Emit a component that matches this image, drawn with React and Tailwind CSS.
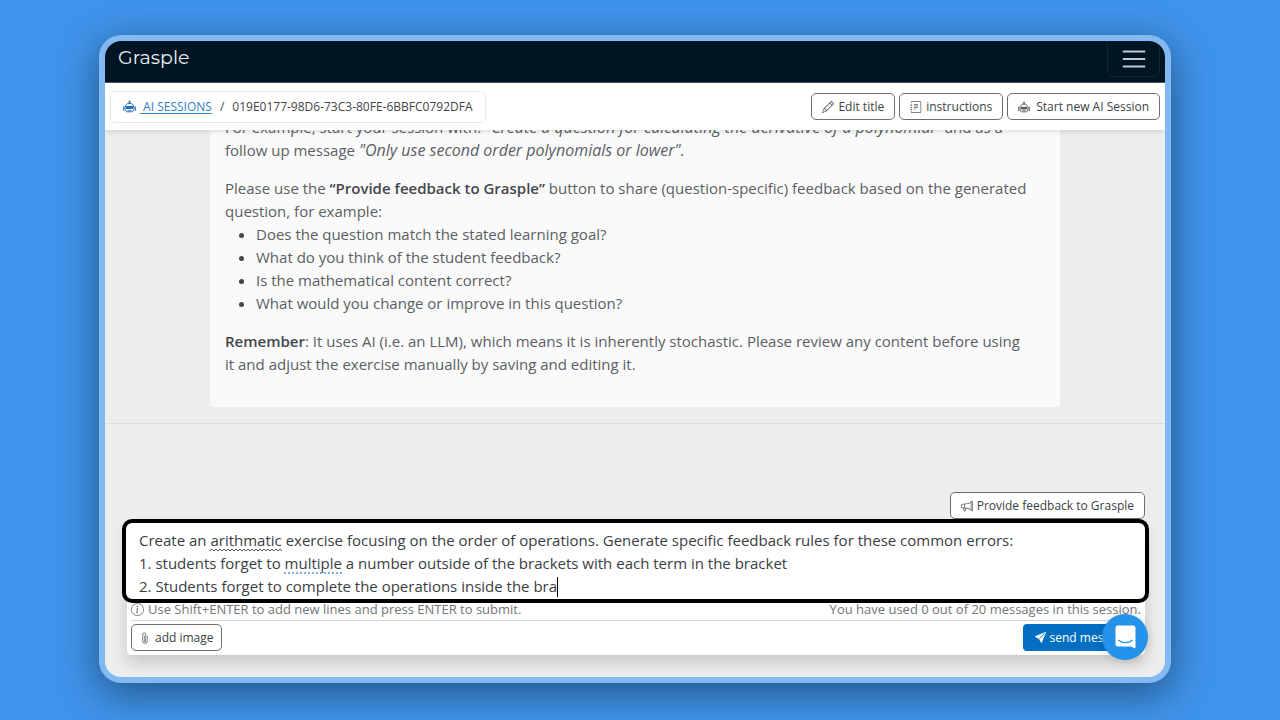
import { useState } from "react";
import {
  BsInfoCircle,
  BsJournalText,
  BsMegaphone,
  BsPaperclip,
  BsPencil,
  BsSendFill,
} from "react-icons/bs";
import clsx from "clsx";

const questions = [
  "Does the question match the stated learning goal?",
  "What do you think of the student feedback?",
  "Is the mathematical content correct?",
  "What would you change or improve in this question?",
];

const draft = [
  "Create an arithmatic exercise focusing on the order of operations. Generate specific feedback rules for these common errors:",
  "1. students forget to multiple a number outside of the brackets with each term in the bracket",
  "2. Students forget to complete the operations inside the bra",
].join("\n");

const RobotIcon = ({ className }) => (
  <svg viewBox="0 0 16 16" className={className} aria-hidden="true">
    <path
      d="M8 1.500v2.500"
      stroke="currentColor"
      strokeWidth="2"
      strokeLinecap="round"
    />
    <path
      d="M2.500 10C2.500 6 4.800 4 8 4s5.500 2 5.500 6c0 3-1 4.500-2.500 4.500H5C3.500 14.500 2.500 13 2.500 10z"
      fill="none"
      stroke="currentColor"
      strokeWidth="1.200"
    />
    <path
      d="M.9 8.500v4M15.100 8.500v4"
      stroke="currentColor"
      strokeWidth="1.400"
      strokeLinecap="round"
    />
    <path
      d="M3.500 7.500h9v2c0 1-.8 1.700-1.700 1.700H5.200c-.9 0-1.700-.7-1.700-1.700z"
      fill="currentColor"
    />
    <path d="M5.500 12.800h5" stroke="currentColor" strokeWidth="1" />
  </svg>
);

const OutlineButton = ({ icon, compact, children }) => (
  <button
    type="button"
    className={clsx(
      "flex h-[27px] items-center gap-1 whitespace-nowrap rounded-[5px] border border-[#6b6f74] bg-white text-xs font-medium text-[#3b3f45]",
      compact ? "px-[7px]" : "px-[10px]"
    )}
  >
    <span className="text-[#5c6065]">{icon}</span>
    {children}
  </button>
);

const Header = () => (
  <header className="flex h-[42px] shrink-0 items-start justify-between border-b border-[#4a5560] bg-[#001524] pl-[13px] pr-[5px]">
    <a
      href="#home"
      className="pt-1 font-['Montserrat','Lato',sans-serif] text-[19px] leading-[26px] text-[#e8ecef]"
    >
      Grasple
    </a>
    <button
      type="button"
      aria-label="Toggle navigation"
      className="flex h-9 w-[53px] items-center justify-center rounded-b-md border border-t-0 border-[#12222f]"
    >
      <svg viewBox="0 0 30 30" className="size-7" aria-hidden="true">
        <path
          d="M3 7h24M3 15h24M3 23h24"
          stroke="#c3c9ce"
          strokeWidth="2"
          fill="none"
        />
      </svg>
    </button>
  </header>
);

const SessionBar = () => (
  <div className="z-10 flex h-[47px] shrink-0 items-center justify-between bg-white px-[5px] shadow-[0_2px_4px_rgba(0,0,0,0.1)]">
    <nav
      aria-label="Breadcrumb"
      className="flex h-8 items-center rounded-[5px] border border-[#e9e9ea] px-3 text-xs text-[#3f4348]"
    >
      <RobotIcon className="mr-1 size-[13px] text-[#1f6fb5]" />
      <a
        href="#sessions"
        className="whitespace-pre text-[#2f7fc4] underline underline-offset-2"
      >
        {" AI SESSIONS"}
      </a>
      <span className="px-2">/</span>
      <span>019E0177-98D6-73C3-80FE-6BBFC0792DFA</span>
    </nav>
    <div className="flex gap-1">
      <OutlineButton icon={<BsPencil className="size-3" />}>
        Edit title
      </OutlineButton>
      <OutlineButton icon={<BsJournalText className="size-3" />}>
        instructions
      </OutlineButton>
      <OutlineButton icon={<RobotIcon className="mr-0.5 size-3" />}>
        Start new AI Session
      </OutlineButton>
    </div>
  </div>
);

const Intro = () => (
  <section className="flex min-h-0 flex-1 flex-col justify-end overflow-hidden border-b border-[#dcdcdd] px-[105px] pb-4">
    <div className="rounded-b-[4px] bg-[#fafafb] pr-[30px] pb-[31px] pl-[15px] text-[15px] leading-[23px] text-[#5b5f64]">
      <p className="mb-[15px]">
        For example, start your session with:{" "}
        <em className="text-base leading-[23px]">
          "Create a question for calculating the derivative of a polynomial"
        </em>{" "}
        and as a follow up message{" "}
        <em className="text-base leading-[23px]">
          "Only use second order polynomials or lower".
        </em>
      </p>
      <p>
        Please use the{" "}
        <strong className="font-semibold text-[#43474c]">
          “Provide feedback to Grasple”
        </strong>{" "}
        button to share (question-specific) feedback based on the generated
        question, for example:
      </p>
      <ul className="mb-[15px] list-disc pl-[31px] marker:text-[#43474c]">
        {questions.map((question) => (
          <li key={question}>{question}</li>
        ))}
      </ul>
      <p>
        <strong className="font-semibold text-[#43474c]">Remember</strong>: It
        uses AI (i.e. an LLM), which means it is inherently stochastic. Please
        review any content before using it and adjust the exercise manually by
        saving and editing it.
      </p>
    </div>
  </section>
);

const MessageBox = () => {
  const [message, setMessage] = useState(draft);

  return (
    <div className="relative z-10 -ml-px rounded-[6px] bg-white outline-4 outline-black">
      <textarea
        aria-label="Message"
        rows={3}
        spellCheck={false}
        value={message}
        onChange={(e) => setMessage(e.target.value)}
        className="block w-full resize-none overflow-hidden px-[13px] pt-1.5 pb-px text-[15px] leading-[23px] text-[#3a3e43] outline-none"
      />
      {/* spelling and grammar marks, then the caret */}
      {message === draft && (
        <>
          <svg
            className="absolute top-[25px] left-[84px] h-1 w-[72px]"
            aria-hidden="true"
          >
            <pattern
              id="squiggle"
              width="4"
              height="4"
              patternUnits="userSpaceOnUse"
            >
              <path d="M0 3l2-2 2 2" stroke="#555" fill="none" />
            </pattern>
            <rect width="72" height="4" fill="url(#squiggle)" />
          </svg>
          <span className="absolute top-[49px] left-[158px] w-[58px] border-b-2 border-dotted border-[#7fb0dd]" />
          <span className="absolute top-[54px] left-[431px] h-5 w-px bg-black" />
        </>
      )}
    </div>
  );
};

const Composer = () => (
  <form
    className="flex shrink-0 flex-col pt-[68px] pr-5 pb-[22px] pl-[22px]"
    onSubmit={(e) => e.preventDefault()}
  >
    <div className="mb-1 flex justify-end">
      <OutlineButton icon={<BsMegaphone className="size-3" />}>
        Provide feedback to Grasple
      </OutlineButton>
    </div>
    <div className="flex flex-col rounded-[4px] bg-white shadow-[0_8px_16px_rgba(0,0,0,0.16)]">
      <MessageBox />
      <div className="mx-1 mb-[3px] flex items-center justify-between border-b border-[#d5d6d9] text-[13px] leading-[21px] text-[#72767b]">
        <span className="flex items-center gap-1">
          <BsInfoCircle className="size-[13px]" aria-hidden="true" />
          Use Shift+ENTER to add new lines and press ENTER to submit.
        </span>
        <span>You have used 0 out of 20 messages in this session.</span>
      </div>
      <div className="flex justify-between px-1 pb-1">
        <OutlineButton compact icon={<BsPaperclip className="size-3" />}>
          add image
        </OutlineButton>
        <button
          type="submit"
          className="flex h-[27px] items-center gap-1 whitespace-nowrap rounded-[4px] bg-[#026fc2] px-3 text-xs font-medium text-white"
        >
          <BsSendFill className="size-[11px]" />
          send message
        </button>
      </div>
    </div>
  </form>
);

const ChatLauncher = () => (
  <button
    type="button"
    aria-label="Open chat"
    className="absolute right-[17px] bottom-[17px] z-20 flex size-[46px] items-center justify-center rounded-full bg-[#2492e8] shadow-[0_1px_10px_rgba(0,0,0,0.14)]"
  >
    <svg viewBox="0 0 21 24" className="h-6 w-[21px]" aria-hidden="true">
      <path
        d="M3 0.5h15a2.5 2.5 0 0 1 2.5 2.5v20.5l-5-2H3A2.5 2.5 0 0 1 .5 19V3A2.5 2.5 0 0 1 3 .5z"
        fill="#fff"
      />
      <path
        d="M3.7 15.3c4 3.2 9.600 3.200 13.600 0"
        stroke="#2492e8"
        strokeWidth="1.300"
        strokeLinecap="round"
        fill="none"
      />
    </svg>
  </button>
);

export default function App() {
  return (
    <div className="flex h-screen bg-[#3f94ea] pt-[35px] pr-[109px] pb-[37px] pl-[99px] font-['Open_Sans',sans-serif]">
      <main className="flex flex-1 rounded-[22px] bg-[#82b9f2] p-1.5 shadow-[0_10px_40px_rgba(0,0,0,0.45)]">
        <div className="relative flex min-w-0 flex-1 flex-col overflow-hidden rounded-[16px] bg-[#ededed]">
          <Header />
          <SessionBar />
          <Intro />
          <Composer />
          <ChatLauncher />
        </div>
      </main>
    </div>
  );
}
